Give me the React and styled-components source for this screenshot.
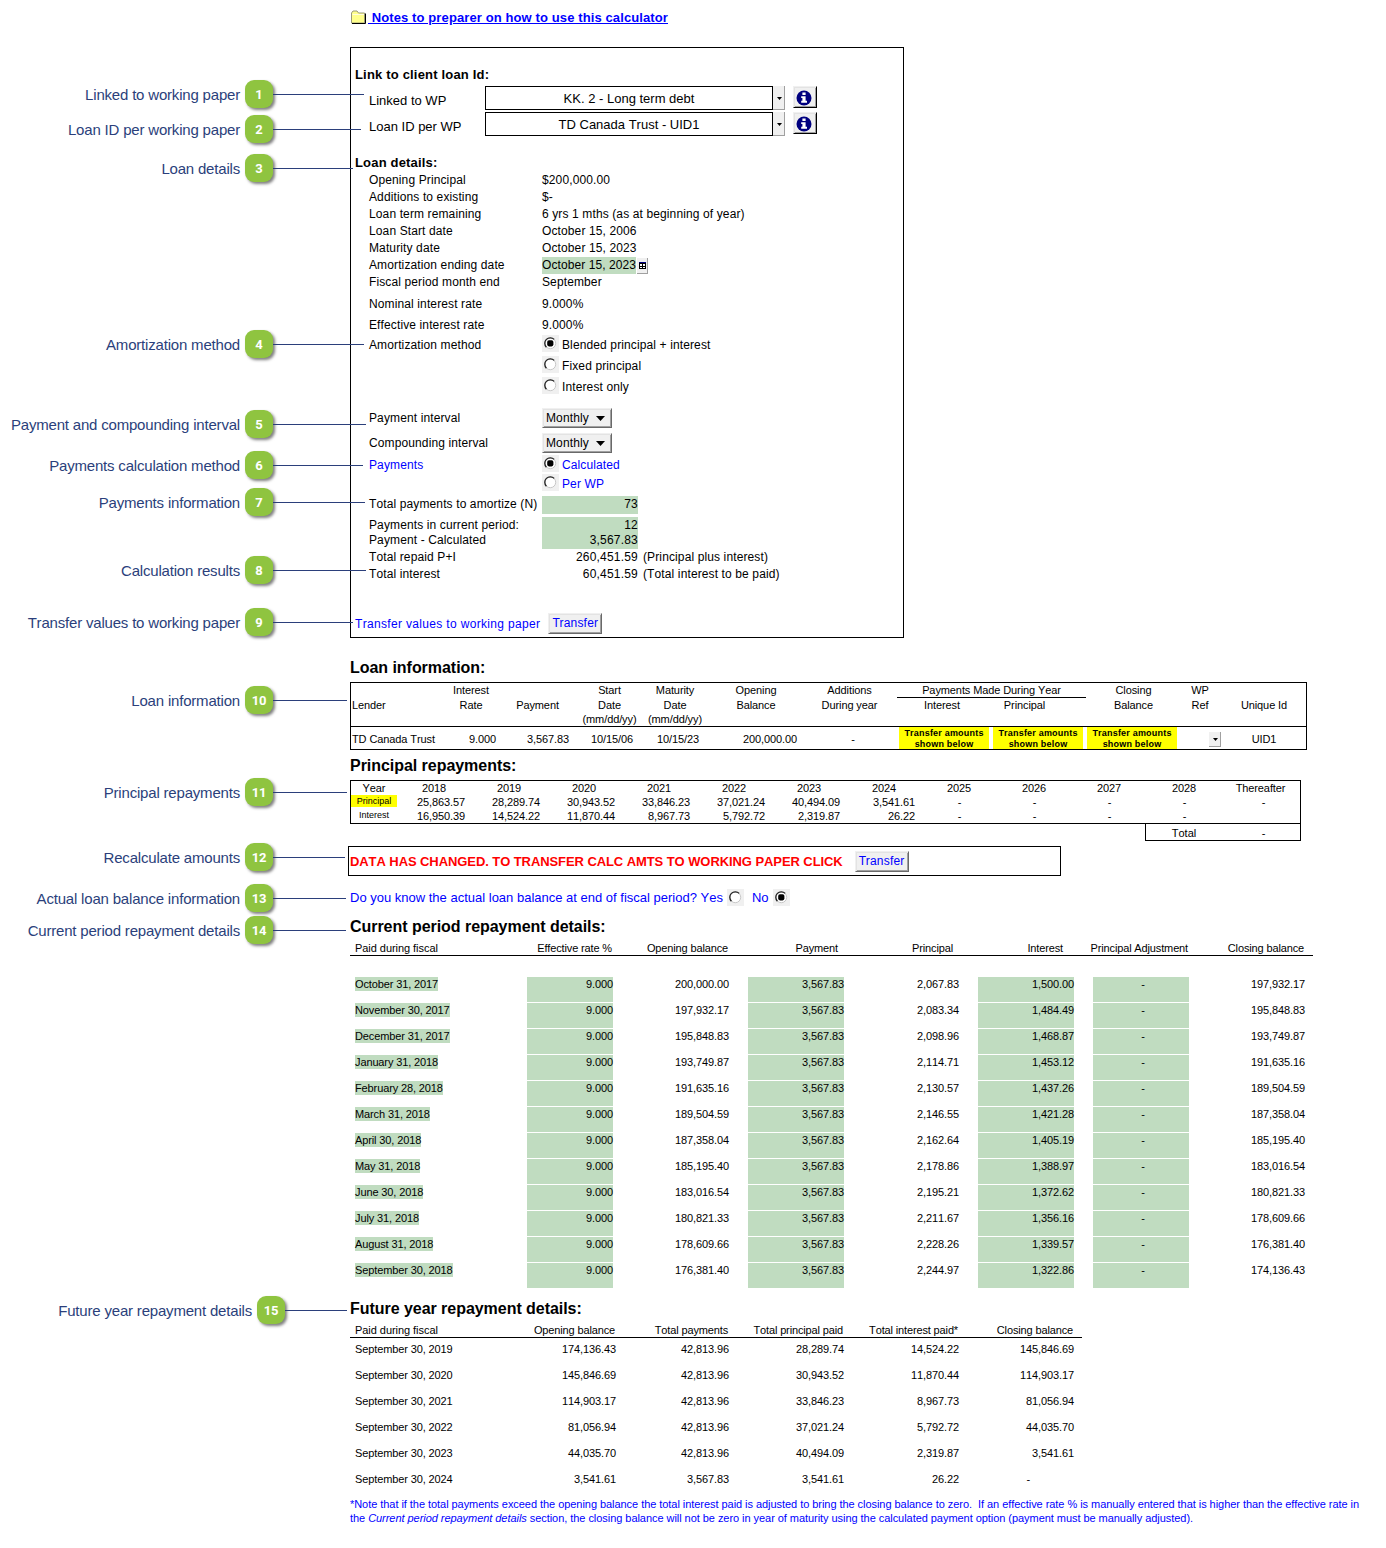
import React from "react";
import styled, { createGlobalStyle, css } from "styled-components";

const GlobalStyle = createGlobalStyle`
  * {
    box-sizing: border-box;
  }
  body {
    margin: 0;
    background: #fff;
    color: #000;
    font-family: "Liberation Sans", Arial, sans-serif;
    font-kerning: none;
  }
`;

const Page = styled.div`
  display: flex;
  width: 1386px;
  height: 1548px;
  overflow: hidden;
`;

/* Callouts */

const Callouts = styled.aside`
  position: relative;
  z-index: 1;
  flex: 0 0 348px;
  width: 348px;
  padding-top: 80px;
`;

const Callout = styled.div`
  display: flex;
  align-items: center;
  height: 28px;
  margin-top: ${props => props.$gap}px;
  padding-left: ${props => props.$indent || 0}px;
`;

const CalloutLabel = styled.span`
  flex: 0 0 240px;
  text-align: right;
  white-space: nowrap;
  font-size: 15px;
  line-height: 28px;
  letter-spacing: -0.19px;
  padding-top: 1px;
  color: #2b3f7b;
`;

const Badge = styled.span`
  flex: 0 0 28px;
  height: 28px;
  margin-left: 5px;
  border-radius: 9px;
  background: #8fc440;
  box-shadow: 2px 2px 3px rgba(0, 0, 0, 0.5);
  color: #fff;
  font: 700 13px/29px Roboto, sans-serif;
  letter-spacing: -0.2px;
  text-align: center;
`;

const Leader = styled.span`
  flex: 0 0 ${props => props.$length}px;
  height: 1px;
  margin-top: 1px;
  background: #2b3f7b;
`;

/* Shared parts */

const Content = styled.main`
  flex: 1;
  padding-left: 2px;
`;

const NotesLink = styled.a`
  display: flex;
  align-items: center;
  height: 47px;
  padding: 0 0 12px 1px;
  color: #0000ff;
  font-size: 13px;
  font-weight: bold;
  letter-spacing: 0.11px;
  white-space: pre;
  text-decoration: none;

  span {
    margin-left: 1px;
    text-decoration: underline;
  }
`;

const SectionTitle = styled.h2`
  margin: ${props => props.$gap || 0}px 0 0;
  height: 20px;
  font-size: 16px;
  line-height: 20px;
  letter-spacing: -0.04px;
`;

const raised = css`
  background: #f0f0f0;
  border: 1px solid;
  border-color: #f0f0f0 #696969 #696969 #f0f0f0;
  box-shadow: inset 1px 1px 0 #e3e3e3, inset -1px -1px 0 #a0a0a0;
`;

const Button = styled.button`
  ${raised}
  width: 54px;
  height: 21px;
  padding: 0;
  margin-left: ${props => props.$gap}px;
  color: #0000ff;
  font: 12px/17px "Liberation Sans", Arial, sans-serif;
  letter-spacing: 0.2px;
`;

const RadioBox = styled.span`
  display: inline-flex;
  flex: 0 0 17px;
  width: 17px;
  height: 17px;
  background: #f0f0f0;
`;

const Radio = ({ checked }) => (
  <RadioBox>
    <svg width="17" height="17" viewBox="0 0 17 17">
      <circle cx="8.3" cy="8.3" r="5.4" fill="#fff" stroke="#c8c8c8" />
      <path d="M4.4 12.2A5.5 5.5 0 0 1 12.2 4.4" fill="none" stroke="#222" strokeWidth="1.3" />
      {checked && <rect x="5.2" y="5.2" width="6.2" height="6.2" rx="1.8" fill="#000" />}
    </svg>
  </RadioBox>
);

const Arrow = ({ width = 9 }) => (
  <svg width={width} height={(width + 1) / 2} viewBox="0 0 8 4" preserveAspectRatio="none">
    <path d="M0 0H8L4 4Z" fill="#000" />
  </svg>
);

const FolderIcon = () => (
  <svg width="16" height="15" viewBox="0 0 16 15">
    <path d="M0.5 13V3L2 1H6L7.5 3H13.5V13Z" fill="#ffff8c" stroke="#9a9a7a" />
    <path d="M1.5 4.5H13" stroke="#fffde0" />
    <path d="M1 13.5H14.5V3.5" fill="none" stroke="#000" />
  </svg>
);

const InfoIcon = () => (
  <svg width="16" height="16" viewBox="0 0 16 16">
    <circle cx="8" cy="8" r="7.5" fill="#000080" />
    <path d="M6.4 2.6H9.6V5H6.4ZM5.2 6.2H9.6V10.8H11V12.8H5.2V10.8H6.4V8H5.2Z" fill="#fff" />
  </svg>
);

const CalendarIcon = () => (
  <svg width="7" height="7" viewBox="0 0 7 7" shapeRendering="crispEdges">
    <path d="M0 0H7V7H0Z" fill="#000" />
    <path d="M1 2H3V4H1ZM4 2H6V4H4ZM1 5H3V6H1ZM4 5H6V6H4Z" fill="#fff" />
    <path d="M0 0H7V1H0Z" fill="#000080" />
  </svg>
);

/* Loan panel */

const Panel = styled.section`
  width: 554px;
  height: 591px;
  padding-top: 17px;
  border: 1px solid #000;
  font-size: 12px;
  letter-spacing: 0.12px;
`;

const PanelTitle = styled.h3`
  margin: ${props => props.$gap || 0}px 0 0 4px;
  height: ${props => props.$height}px;
  font-size: 13px;
  line-height: 19px;
  letter-spacing: 0.18px;
`;

const PickerRow = styled.div`
  display: flex;
  height: 24px;
  margin-top: 2px;
  padding-left: 18px;
  font-size: 13px;
  letter-spacing: 0;
`;

const PickerLabel = styled.span`
  flex: 0 0 116px;
  padding-top: 2px;
  line-height: 26px;
`;

const Picker = styled.div`
  flex: 0 0 288px;
  border: 1px solid #000;
  text-align: center;
  line-height: 23px;
`;

const PickerArrow = styled.span`
  display: flex;
  flex: 0 0 12px;
  align-items: center;
  justify-content: center;
  padding: 1px 0 0 2px;
  background: #f0f0f0;
  border-right: 1px solid #a0a0a0;
  border-bottom: 1px solid #a0a0a0;
`;

const InfoButton = styled.span`
  ${raised}
  display: flex;
  flex: 0 0 24px;
  align-items: center;
  justify-content: center;
  height: 22px;
  margin-left: 8px;
  padding: 1px 2px 0 0;
  border-color: #f0f0f0 #000 #000 #f0f0f0;
`;

const Field = styled.div`
  display: flex;
  align-items: ${props => (props.$top ? "flex-start" : "center")};
  height: ${props => props.$height || 17}px;
  margin-top: ${props => props.$gap || 0}px;
  padding-left: 18px;
  color: ${props => (props.$blue ? "#0000ff" : "#000")};
  line-height: ${props => (props.$top ? "16px" : "normal")};
  white-space: nowrap;
`;

const FieldLabel = styled.span`
  flex: 0 0 173px;
  padding-top: ${props => (props.$low ? 2 : 0)}px;
`;

const DateHighlight = styled.span`
  height: 17px;
  margin-top: 2px;
  line-height: 16px;
  letter-spacing: 0.08px;
  background: #c0dcc0;
`;

const CalendarButton = styled.span`
  display: flex;
  align-items: center;
  justify-content: center;
  width: 11px;
  height: 16px;
  margin: 2px 0 0 1px;
  background: #f0f0f0;
  border-right: 1px solid #a0a0a0;
  border-bottom: 1px solid #a0a0a0;
`;

const Option = styled.span`
  display: flex;
  gap: 3px;
  height: 17px;
  line-height: 20px;
`;

const Dropdown = styled.span`
  ${raised}
  display: flex;
  align-items: center;
  justify-content: space-between;
  width: 70px;
  height: 20px;
  padding: 0 6px 0 3px;
`;

const Amount = styled.span`
  flex: 0 0 96px;
  height: 100%;
  line-height: 16px;
  text-align: right;
  letter-spacing: 0.2px;
  background: ${props => (props.$green ? "#c0dcc0" : "none")};
`;

const Remark = styled.span`
  margin-left: 5px;
`;

const TransferRow = styled.div`
  display: flex;
  align-items: center;
  margin-top: 30px;
  padding-left: 4px;
  color: #0000ff;
  letter-spacing: 0.33px;
`;

/* Loan information and principal repayments */

const InfoTable = styled.section`
  width: 957px;
  height: 68px;
  margin-top: 4px;
  border: 1px solid #000;
  font-size: 11px;
  letter-spacing: -0.1px;
  text-align: center;
  white-space: nowrap;
`;

const InfoHead = styled.div`
  display: grid;
  grid-template-columns: 95px 50px 83px 61px 70px 92px 95px 189px 95px 38px 87px;
  height: 44px;
  border-bottom: 1px solid #000;
`;

const HeadCell = styled.div`
  display: grid;
  grid-template-rows: 15px 15px 13px;
  line-height: 15px;
  text-align: ${props => (props.$left ? "left" : "center")};
  padding-left: ${props => props.$pad || 0}px;

  > :nth-child(3) {
    line-height: 13px;
  }
`;

const MadeDuringYear = styled.div`
  line-height: 14px;
  border-bottom: 1px solid #000;
`;

const MadeColumns = styled.div`
  display: grid;
  grid-template-columns: 90px 75px;
  line-height: 15px;
`;

const InfoRow = styled.div`
  display: grid;
  grid-template-columns: 95px 50px 73px 86px 46px 96px 102px 278px 44px 85px;
  grid-template-rows: 22px;
  line-height: 24px;
`;

const InfoCell = styled.span`
  text-align: ${props => props.$align || "center"};
  padding-left: ${props => props.$pad || 0}px;
`;

const PendingGroup = styled.div`
  display: flex;
  gap: 4px;
`;

const Pending = styled.span`
  flex: 0 0 90px;
  height: 22px;
  padding-top: 1px;
  background: #ffff00;
  font-size: 9px;
  font-weight: bold;
  line-height: 11px;
  letter-spacing: 0.2px;
  white-space: pre;
`;

const RefArrow = styled.span`
  display: flex;
  align-items: center;
  justify-content: center;
  width: 12px;
  height: 15px;
  margin: 5px 0 0 32px;
  padding-left: 2px;
  background: #f0f0f0;
  border-right: 1px solid #a0a0a0;
  border-bottom: 1px solid #a0a0a0;
`;

const YearTable = styled.section`
  width: 951px;
  height: 44px;
  margin-top: 4px;
  border: 1px solid #000;
  font-size: 11px;
  letter-spacing: -0.1px;
`;

const YearRow = styled.div`
  display: grid;
  grid-template-columns: 46px repeat(11, 75px) 78px;
  height: 14px;
  line-height: 14px;
  text-align: center;

  > :nth-child(13) {
    padding-left: ${props => (props.$amounts ? 5 : 0)}px;
  }
`;

const YearName = styled.span`
  padding-right: 1px;
`;

const YearAmount = styled.span`
  text-align: ${props => (props.$empty ? "center" : "right")};
  padding-right: ${props => (props.$empty ? 0 : 7)}px;
`;

const RowName = styled.span`
  height: 12px;
  font-size: 9px;
  line-height: 12px;
  letter-spacing: 0;
  background: ${props => (props.$marked ? "#ffff00" : "none")};
`;

const YearTotal = styled.div`
  display: grid;
  grid-template-columns: 76px 83px;
  width: 156px;
  height: 18px;
  margin: -1px 0 0 795px;
  border: 1px solid #000;
  font-size: 11px;
  line-height: 19px;
  text-align: center;
`;

const Alert = styled.div`
  display: flex;
  align-items: center;
  width: 713px;
  height: 30px;
  margin: 5px 0 0 -2px;
  padding: 0 0 0 1px;
  border: 1px solid #000;
  color: #ff0000;
  font-size: 13px;
  font-weight: bold;
  letter-spacing: -0.08px;
`;

const Question = styled.div`
  display: flex;
  align-items: center;
  height: 17px;
  margin-top: 13px;
  color: #0000ff;
  font-size: 13px;
  line-height: 19px;
  letter-spacing: 0;
  white-space: nowrap;

  ${RadioBox} {
    margin: 0 8px 0 4px;
  }
`;

/* Repayment tables */

const HeadRow = styled.div`
  display: grid;
  grid-template-columns: ${props => props.$columns};
  width: ${props => props.$width}px;
  height: 19px;
  padding-left: 5px;
  border-bottom: 1px solid #000;
  font-size: 11px;
  line-height: 23px;
  letter-spacing: -0.14px;
  text-align: right;
  white-space: nowrap;

  > :first-child {
    text-align: left;
    letter-spacing: -0.05px;
  }
`;

const DetailRow = styled.div`
  display: grid;
  grid-template-columns: ${props => props.$columns};
  height: 26px;
  padding-left: 5px;
  font-size: 11px;
  line-height: 14px;
  letter-spacing: -0.1px;
`;

const DateCell = styled.span`
  justify-self: start;
  height: 14px;
  letter-spacing: -0.12px;
  background: ${props => (props.$green ? "#c0dcc0" : "none")};
`;

const NumberCell = styled.span`
  height: 25px;
  margin-left: ${props => props.$inset || 0}px;
  text-align: ${props => (props.$center ? "center" : "right")};
  padding-left: ${props => (props.$center ? 4 : 0)}px;
  background: ${props => (props.$green ? "#c0dcc0" : "none")};
`;

const ZeroCell = styled(NumberCell)`
  padding-right: 44px;
`;

const CurrentRows = styled.div`
  padding-top: 21px;
  height: 333px;
`;

const FutureRows = styled.div`
  padding-top: 4px;
  height: 159px;
`;

const Note = styled.div`
  color: #0000ff;
  font-size: 11px;
  line-height: 14px;
  letter-spacing: -0.05px;
  white-space: pre;
`;

const callouts = [
  { label: "Linked to working paper", top: 80, length: 91 },
  { label: "Loan ID per working paper", top: 115, length: 88 },
  { label: "Loan details", top: 154, length: 80 },
  { label: "Amortization method", top: 330, length: 91 },
  { label: "Payment and compounding interval", top: 410, length: 93 },
  { label: "Payments calculation method", top: 451, length: 90 },
  { label: "Payments information", top: 488, length: 92 },
  { label: "Calculation results", top: 556, length: 93 },
  { label: "Transfer values to working paper", top: 608, length: 80 },
  { label: "Loan information", top: 686, length: 74 },
  { label: "Principal repayments", top: 778, length: 74 },
  { label: "Recalculate amounts", top: 843, length: 72 },
  { label: "Actual loan balance information", top: 884, length: 73 },
  { label: "Current period repayment details", top: 916, length: 73 },
  { label: "Future year repayment details", top: 1296, length: 62, indent: 12 }
];

const details = [
  ["Opening Principal", "$200,000.00"],
  ["Additions to existing", "$-"],
  ["Loan term remaining", "6 yrs 1 mths (as at beginning of year)"],
  ["Loan Start date", "October 15, 2006"],
  ["Maturity date", "October 15, 2023"]
];

const infoHead = [
  ["Interest", "Rate"],
  ["", "Payment"],
  ["Start", "Date", "(mm/dd/yy)"],
  ["Maturity", "Date", "(mm/dd/yy)"],
  ["Opening", "Balance"],
  ["Additions", "During year"]
];

const years = ["2018", "2019", "2020", "2021", "2022", "2023", "2024", "2025", "2026", "2027", "2028", "Thereafter"];
const principal = ["25,863.57", "28,289.74", "30,943.52", "33,846.23", "37,021.24", "40,494.09", "3,541.61", "-", "-", "-", "-", "-"];
const interest = ["16,950.39", "14,524.22", "11,870.44", "8,967.73", "5,792.72", "2,319.87", "26.22", "-", "-", "-", "-"];

const current = [
  ["October 31, 2017", "200,000.00", "2,067.83", "1,500.00", "197,932.17"],
  ["November 30, 2017", "197,932.17", "2,083.34", "1,484.49", "195,848.83"],
  ["December 31, 2017", "195,848.83", "2,098.96", "1,468.87", "193,749.87"],
  ["January 31, 2018", "193,749.87", "2,114.71", "1,453.12", "191,635.16"],
  ["February 28, 2018", "191,635.16", "2,130.57", "1,437.26", "189,504.59"],
  ["March 31, 2018", "189,504.59", "2,146.55", "1,421.28", "187,358.04"],
  ["April 30, 2018", "187,358.04", "2,162.64", "1,405.19", "185,195.40"],
  ["May 31, 2018", "185,195.40", "2,178.86", "1,388.97", "183,016.54"],
  ["June 30, 2018", "183,016.54", "2,195.21", "1,372.62", "180,821.33"],
  ["July 31, 2018", "180,821.33", "2,211.67", "1,356.16", "178,609.66"],
  ["August 31, 2018", "178,609.66", "2,228.26", "1,339.57", "176,381.40"],
  ["September 30, 2018", "176,381.40", "2,244.97", "1,322.86", "174,136.43"]
];

const future = [
  ["September 30, 2019", "174,136.43", "42,813.96", "28,289.74", "14,524.22", "145,846.69"],
  ["September 30, 2020", "145,846.69", "42,813.96", "30,943.52", "11,870.44", "114,903.17"],
  ["September 30, 2021", "114,903.17", "42,813.96", "33,846.23", "8,967.73", "81,056.94"],
  ["September 30, 2022", "81,056.94", "42,813.96", "37,021.24", "5,792.72", "44,035.70"],
  ["September 30, 2023", "44,035.70", "42,813.96", "40,494.09", "2,319.87", "3,541.61"],
  ["September 30, 2024", "3,541.61", "3,567.83", "3,541.61", "26.22", "-"]
];

const CalloutList = () => (
  <Callouts>
    {callouts.map((c, i) => (
      <Callout key={c.label} $gap={i ? c.top - callouts[i - 1].top - 28 : 0} $indent={c.indent}>
        <CalloutLabel>{c.label}</CalloutLabel>
        <Badge>{i + 1}</Badge>
        <Leader $length={c.length} />
      </Callout>
    ))}
  </Callouts>
);

const LoanPanel = () => (
  <Panel>
    <PanelTitle $height={19}>Link to client loan Id:</PanelTitle>
    <PickerRow>
      <PickerLabel>Linked to WP</PickerLabel>
      <Picker>KK. 2 - Long term debt</Picker>
      <PickerArrow><Arrow width={5} /></PickerArrow>
      <InfoButton><InfoIcon /></InfoButton>
    </PickerRow>
    <PickerRow>
      <PickerLabel>Loan ID per WP</PickerLabel>
      <Picker>TD Canada Trust - UID1</Picker>
      <PickerArrow><Arrow width={5} /></PickerArrow>
      <InfoButton><InfoIcon /></InfoButton>
    </PickerRow>

    <PanelTitle $gap={17} $height={18}>Loan details:</PanelTitle>
    {details.map(([label, value]) => (
      <Field key={label}>
        <FieldLabel>{label}</FieldLabel>
        <span>{value}</span>
      </Field>
    ))}
    <Field>
      <FieldLabel>Amortization ending date</FieldLabel>
      <DateHighlight>October 15, 2023</DateHighlight>
      <CalendarButton><CalendarIcon /></CalendarButton>
    </Field>
    <Field>
      <FieldLabel>Fiscal period month end</FieldLabel>
      <span>September</span>
    </Field>
    <Field $height={27}>
      <FieldLabel>Nominal interest rate</FieldLabel>
      <span>9.000%</span>
    </Field>
    <Field $height={15}>
      <FieldLabel>Effective interest rate</FieldLabel>
      <span>9.000%</span>
    </Field>
    <Field $height={21} $gap={1}>
      <FieldLabel $low>Amortization method</FieldLabel>
      <Option><Radio checked /> Blended principal + interest</Option>
    </Field>
    <Field $height={21}>
      <FieldLabel />
      <Option><Radio /> Fixed principal</Option>
    </Field>
    <Field $height={21}>
      <FieldLabel />
      <Option><Radio /> Interest only</Option>
    </Field>
    <Field $height={26} $gap={9}>
      <FieldLabel>Payment interval</FieldLabel>
      <Dropdown>Monthly <Arrow /></Dropdown>
    </Field>
    <Field $height={24}>
      <FieldLabel>Compounding interval</FieldLabel>
      <Dropdown>Monthly <Arrow /></Dropdown>
    </Field>
    <Field $blue>
      <FieldLabel $low>Payments</FieldLabel>
      <Option><Radio checked /> Calculated</Option>
    </Field>
    <Field $height={19} $gap={1} $blue>
      <FieldLabel />
      <Option><Radio /> Per WP</Option>
    </Field>
    <Field $height={18} $gap={4} $top>
      <FieldLabel>Total payments to amortize (N)</FieldLabel>
      <Amount $green>73</Amount>
    </Field>
    <Field $height={15} $gap={3} $top>
      <FieldLabel>Payments in current period:</FieldLabel>
      <Amount $green>12</Amount>
    </Field>
    <Field $top>
      <FieldLabel>Payment - Calculated</FieldLabel>
      <Amount $green>3,567.83</Amount>
    </Field>
    <Field $top>
      <FieldLabel>Total repaid P+I</FieldLabel>
      <Amount>260,451.59</Amount>
      <Remark>(Principal plus interest)</Remark>
    </Field>
    <Field $top>
      <FieldLabel>Total interest</FieldLabel>
      <Amount>60,451.59</Amount>
      <Remark>(Total interest to be paid)</Remark>
    </Field>
    <TransferRow>
      Transfer values to working paper
      <Button $gap={8}>Transfer</Button>
    </TransferRow>
  </Panel>
);

const LoanInformation = () => (
  <InfoTable>
    <InfoHead>
      <HeadCell $left $pad={1}><span /><span>Lender</span></HeadCell>
      {infoHead.map((lines, i) => (
        <HeadCell key={i}>
          {lines.map((line, j) => <span key={j}>{line}</span>)}
        </HeadCell>
      ))}
      <HeadCell>
        <MadeDuringYear>Payments Made During Year</MadeDuringYear>
        <MadeColumns><span>Interest</span><span>Principal</span></MadeColumns>
      </HeadCell>
      <HeadCell><span>Closing</span><span>Balance</span></HeadCell>
      <HeadCell><span>WP</span><span>Ref</span></HeadCell>
      <HeadCell $pad={3}><span /><span>Unique Id</span></HeadCell>
    </InfoHead>
    <InfoRow>
      <InfoCell $align="left" $pad={1}>TD Canada Trust</InfoCell>
      <InfoCell $align="right">9.000</InfoCell>
      <InfoCell $align="right">3,567.83</InfoCell>
      <InfoCell>10/15/06</InfoCell>
      <InfoCell>10/15/23</InfoCell>
      <InfoCell $align="right">200,000.00</InfoCell>
      <InfoCell $pad={10}>-</InfoCell>
      <PendingGroup>
        <Pending>{"Transfer amounts\nshown below"}</Pending>
        <Pending>{"Transfer amounts\nshown below"}</Pending>
        <Pending>{"Transfer amounts\nshown below"}</Pending>
      </PendingGroup>
      <RefArrow><Arrow width={5} /></RefArrow>
      <InfoCell $pad={1}>UID1</InfoCell>
    </InfoRow>
  </InfoTable>
);

const PrincipalRepayments = () => (
  <>
    <YearTable>
      <YearRow>
        <span>Year</span>
        {years.map(year => <YearName key={year}>{year}</YearName>)}
      </YearRow>
      <YearRow $amounts>
        <RowName $marked>Principal</RowName>
        {principal.map((v, i) => <YearAmount key={i} $empty={v === "-"}>{v}</YearAmount>)}
      </YearRow>
      <YearRow $amounts>
        <RowName>Interest</RowName>
        {interest.map((v, i) => <YearAmount key={i} $empty={v === "-"}>{v}</YearAmount>)}
      </YearRow>
    </YearTable>
    <YearTotal>
      <span>Total</span>
      <span>-</span>
    </YearTotal>
  </>
);

const CurrentPeriod = () => (
  <>
    <HeadRow $width={963} $columns="172px 85px 116px 110px 115px 110px 125px 116px">
      <span>Paid during fiscal</span>
      <span>Effective rate %</span>
      <span>Opening balance</span>
      <span>Payment</span>
      <span>Principal</span>
      <span>Interest</span>
      <span>Principal Adjustment</span>
      <span>Closing balance</span>
    </HeadRow>
    <CurrentRows>
      {current.map(([date, opening, paid, charged, closing]) => (
        <DetailRow key={date} $columns="172px 86px 116px 115px 115px 115px 115px 116px">
          <DateCell $green>{date}</DateCell>
          <NumberCell $green>9.000</NumberCell>
          <NumberCell>{opening}</NumberCell>
          <NumberCell $green $inset={19}>3,567.83</NumberCell>
          <NumberCell>{paid}</NumberCell>
          <NumberCell $green $inset={19}>{charged}</NumberCell>
          <NumberCell $green $inset={19} $center>-</NumberCell>
          <NumberCell>{closing}</NumberCell>
        </DetailRow>
      ))}
    </CurrentRows>
  </>
);

const FutureYears = () => (
  <>
    <HeadRow $width={732} $columns="145px 115px 113px 115px 115px 115px">
      <span>Paid during fiscal</span>
      <span>Opening balance</span>
      <span>Total payments</span>
      <span>Total principal paid</span>
      <span>Total interest paid*</span>
      <span>Closing balance</span>
    </HeadRow>
    <FutureRows>
      {future.map(([date, ...amounts]) => (
        <DetailRow key={date} $columns="145px 116px 113px 115px 115px 115px">
          <DateCell>{date}</DateCell>
          {amounts.map((v, i) =>
            v === "-" ? <ZeroCell key={i}>{v}</ZeroCell> : <NumberCell key={i}>{v}</NumberCell>
          )}
        </DetailRow>
      ))}
    </FutureRows>
  </>
);

const App = () => (
  <>
    <GlobalStyle />
    <Page>
      <CalloutList />
      <Content>
        <NotesLink href="#notes">
          <FolderIcon />
          <span> Notes to preparer on how to use this calculator</span>
        </NotesLink>
        <LoanPanel />
        <SectionTitle $gap={20}>Loan information:</SectionTitle>
        <LoanInformation />
        <SectionTitle $gap={6}>Principal repayments:</SectionTitle>
        <PrincipalRepayments />
        <Alert>
          DATA HAS CHANGED. TO TRANSFER CALC AMTS TO WORKING PAPER CLICK
          <Button $gap={12}>Transfer</Button>
        </Alert>
        <Question>
          Do you know the actual loan balance at end of fiscal period? Yes <Radio />
          No <Radio checked />
        </Question>
        <SectionTitle $gap={11}>Current period repayment details:</SectionTitle>
        <CurrentPeriod />
        <SectionTitle $gap={10}>Future year repayment details:</SectionTitle>
        <FutureYears />
        <Note>
          {"*Note that if the total payments exceed the opening balance the total interest paid is adjusted to bring the closing balance to zero.  If an effective rate % is manually entered that is higher than the effective rate in"}
        </Note>
        <Note>
          {"the "}
          <i>Current period repayment details</i>
          {" section, the closing balance will not be zero in year of maturity using the calculated payment option (payment must be manually adjusted)."}
        </Note>
      </Content>
    </Page>
  </>
);

export default App;
